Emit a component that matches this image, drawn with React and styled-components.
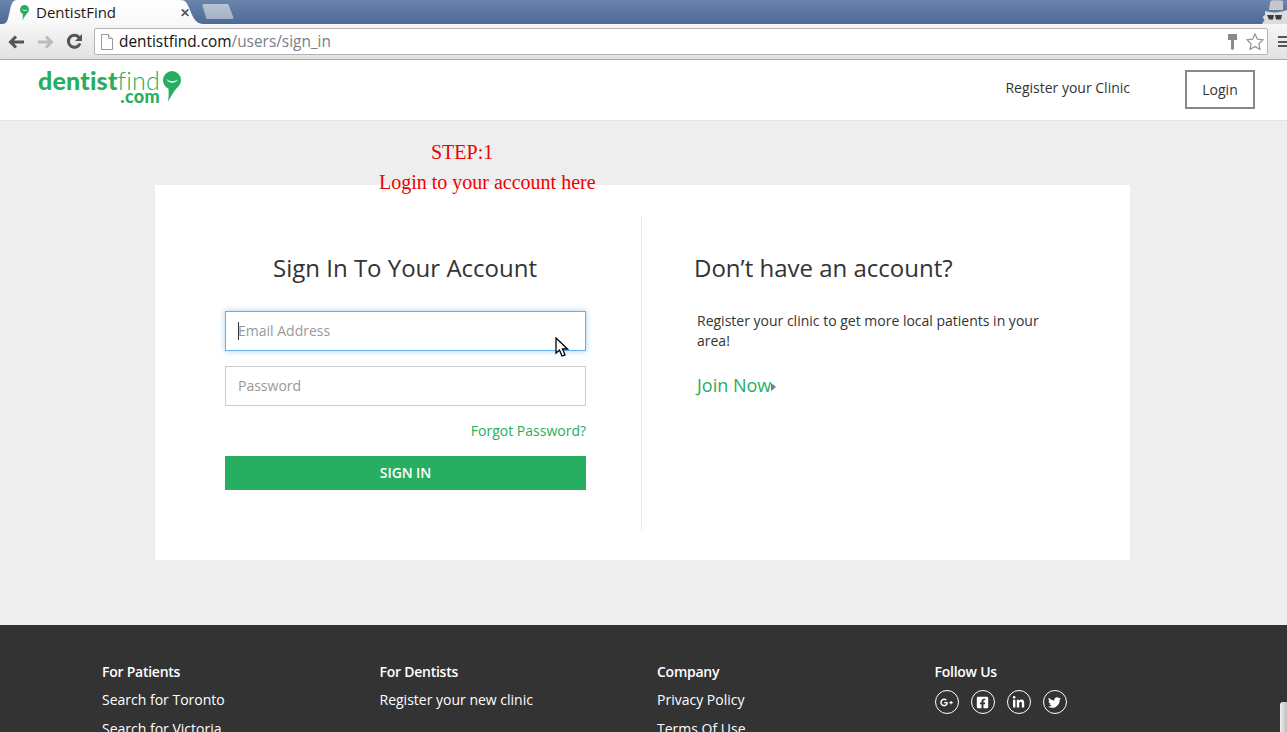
import React from 'react';
import styled, { createGlobalStyle } from 'styled-components';
import { FaGooglePlusG, FaFacebookSquare, FaLinkedinIn, FaTwitter } from 'react-icons/fa';

const GREEN = '#27ae60';

const GlobalStyle = createGlobalStyle`
  html, body {
    margin: 0;
    height: 732px;
    overflow: hidden;
    background: #eeeeee;
    font-family: 'Open Sans', 'Liberation Sans', sans-serif;
  }
  * { box-sizing: border-box; }
`;

const Page = styled.div`
  position: relative;
  display: flex;
  flex-direction: column;
  width: 1287px;
  height: 732px;
  overflow: hidden;
`;

/* browser chrome */
const TabStrip = styled.div`
  position: relative;
  display: flex;
  align-items: flex-end;
  flex: 0 0 24px;
  padding-left: 2px;
  background: linear-gradient(#6a84ab, #4d6a96);
`;

const Tab = styled.div`
  display: flex;
  align-items: center;
  width: 202px;
  height: 24px;
  padding: 0 14px 0 18px;
  background: linear-gradient(#ffffff, #f8f8f8);
  clip-path: path('M0 24 C6 24 6 18 8 10 C10 2 11 0 16 0 L178 0 C184 0 185 3 188 10 C191 18 194 24 202 24 Z');
`;

const TabTitle = styled.span`
  flex: 1;
  margin-left: 7px;
  font-size: 15px;
  color: #1a1a1a;
`;

const TabClose = styled.span`
  font-size: 12px;
  font-weight: 700;
  color: #555;
  margin-top: 1px;
`;

const NewTab = styled.div`
  width: 32px;
  height: 15px;
  margin: 0 0 5px -2px;
  background: linear-gradient(#b8c2d2, #a4b1c6);
  clip-path: polygon(0 0, 82% 0, 100% 100%, 14% 100%);
  border-radius: 2px;
`;

const Spy = styled.svg`
  position: absolute;
  top: 0;
  right: 0;
`;

const Toolbar = styled.div`
  display: flex;
  align-items: center;
  flex: 0 0 36px;
  padding: 0 0 0 8px;
  background: linear-gradient(#f6f6f6, #e2e2e2);
  border-bottom: 1px solid #a9a9a9;
`;

const NavIcons = styled.div`
  display: flex;
  align-items: center;
  gap: 12px;
  width: 86px;
`;

const AddressBar = styled.div`
  display: flex;
  align-items: center;
  width: 1174px;
  height: 27px;
  padding: 0 3px 0 6px;
  background: #fff;
  border: 1px solid #b4b4b4;
  border-radius: 2px;
`;

const Url = styled.span`
  flex: 1;
  margin-left: 6px;
  font-size: 15.4px;
  color: #111;
`;

const UrlPath = styled.span`
  color: #76808c;
`;

const Menu = styled.div`
  width: 9px;
  height: 11px;
  margin-left: 10px;
  border-top: 2px solid #555;
  border-bottom: 2px solid #555;
  position: relative;
  &::after {
    content: '';
    display: block;
    margin-top: 2.5px;
    height: 2px;
    background: #555;
  }
`;

/* site header */
const Header = styled.header`
  display: flex;
  align-items: center;
  flex: 0 0 61px;
  padding: 0 32px 0 38px;
  background: #fff;
  border-bottom: 1px solid #e4e4e4;
`;

const Logo = styled.div`
  display: flex;
  align-items: flex-start;
  flex: 1;
  margin-top: -5px;
`;

const LogoText = styled.div`
  display: flex;
  flex-direction: column;
  align-items: flex-end;
  font-family: 'Lato', sans-serif;
  color: ${GREEN};
  line-height: 1;
`;

const LogoName = styled.div`
  font-size: 25px;
  font-weight: 900;
  letter-spacing: 0.2px;
  height: 22px;
  line-height: 24px;
`;

const LogoFind = styled.span`
  font-weight: 300;
`;

const LogoCom = styled.div`
  font-size: 18px;
  font-weight: 900;
  margin-top: -3px;
  letter-spacing: 0.3px;
`;

const PinSlot = styled.div`
  margin: 3px 0 0 3px;
`;

const HeaderLink = styled.a`
  font-size: 14px;
  color: #333;
  margin: -5px 55px 0 0;
`;

const LoginButton = styled.a`
  display: flex;
  align-items: center;
  justify-content: center;
  width: 70px;
  height: 39px;
  margin-bottom: 1px;
  border: 2px solid #888;
  font-size: 14px;
  color: #333;
`;

/* main area */
const Main = styled.main`
  display: flex;
  justify-content: center;
  flex: 0 0 504px;
  padding: 64px 157px 65px 155px;
  background: #eeeeee;
`;

const Card = styled.section`
  display: grid;
  grid-template-columns: 487px 1fr;
  width: 975px;
  height: 375px;
  padding: 30px 0;
  background: #fff;
`;

const Annotation = styled.div`
  position: absolute;
  top: ${({ $top }) => $top}px;
  left: ${({ $left }) => $left}px;
  font-family: 'Liberation Serif', serif;
  font-size: ${({ $size }) => $size}px;
  color: #f00000;
  white-space: nowrap;
`;

const SignInColumn = styled.div`
  padding: 36px 55px 0 70px;
  border-right: 1px solid #ececec;
`;

const Heading = styled.h2`
  margin: 0;
  padding-right: ${({ $center }) => ($center ? '1px' : '0')};
  font-size: 24px;
  font-weight: 400;
  line-height: 33px;
  color: #333;
  text-align: ${({ $center }) => ($center ? 'center' : 'left')};
`;

const Form = styled.form`
  display: flex;
  flex-direction: column;
  margin-top: 27px;
`;

const FieldWrap = styled.div`
  position: relative;
  margin-bottom: 15px;
`;

const Input = styled.input`
  display: block;
  width: 100%;
  height: 40px;
  padding: 0 12px 2px;
  font-family: inherit;
  font-size: 14px;
  color: #333;
  background: #fff;
  outline: none;
  border: 1px solid ${({ $focused }) => ($focused ? '#66afe9' : '#cccccc')};
  box-shadow: ${({ $focused }) => ($focused ? '0 0 6px rgba(102, 175, 233, 0.6)' : 'none')};
  &::placeholder {
    color: #999;
    opacity: 1;
  }
`;

const Caret = styled.span`
  position: absolute;
  top: 11px;
  left: 13px;
  width: 1px;
  height: 18px;
  background: #333;
`;

const Forgot = styled.a`
  align-self: flex-end;
  margin: 0 0 15px;
  font-size: 14px;
  line-height: 20px;
  color: ${GREEN};
`;

const SignInButton = styled.button`
  height: 34px;
  border: 0;
  padding: 0 0 2px;
  background: ${GREEN};
  color: #fff;
  font-family: inherit;
  font-size: 14px;
  font-weight: 600;
  letter-spacing: -0.1px;
`;

const MouseCursor = styled.svg`
  position: absolute;
  top: 337px;
  left: 555px;
`;

const RegisterColumn = styled.div`
  padding: 36px 60px 0 52px;
`;

const RegisterText = styled.p`
  width: 360px;
  margin: 27px 0 0 3px;
  font-size: 14px;
  line-height: 20px;
  color: #333;
`;

const JoinNow = styled.a`
  display: flex;
  align-items: center;
  margin: 22px 0 0 3px;
  font-size: 18px;
  line-height: 25px;
  color: ${GREEN};
  &::after {
    content: '';
    margin: 2px 0 0 0;
    border-left: 5px solid #6f7f88;
    border-top: 4px solid transparent;
    border-bottom: 4px solid transparent;
  }
`;

/* footer */
const Footer = styled.footer`
  display: grid;
  grid-template-columns: repeat(4, 277.5px);
  flex: 1;
  padding: 37px 0 0 102px;
  background: #333333;
`;

const FooterHeading = styled.div`
  font-size: 14px;
  font-weight: 600;
  letter-spacing: -0.25px;
  line-height: 20px;
  color: #fff;
  margin-bottom: 8px;
`;

const FooterLink = styled.a`
  display: block;
  font-size: 14px;
  line-height: 20px;
  color: #fff;
  margin-bottom: 9px;
  white-space: nowrap;
`;

const SocialRow = styled.div`
  display: flex;
  gap: 12px;
`;

const SocialIcon = styled.a`
  display: flex;
  align-items: center;
  justify-content: center;
  width: 24px;
  height: 24px;
  border: 1px solid #fff;
  border-radius: 50%;
  font-size: 13px;
  color: #fff;
`;

const ScrollThumb = styled.div`
  position: absolute;
  right: 0;
  bottom: 0;
  width: 7px;
  height: 30px;
  border-radius: 3px 0 0 0;
  background: linear-gradient(90deg, #f0f0f0, #bdbdbd);
`;

const FaviconSlot = styled.div`
  display: flex;
  margin-top: 2px;
`;

const footerColumns = [
  { title: 'For Patients', links: ['Search for Toronto', 'Search for Victoria'] },
  { title: 'For Dentists', links: ['Register your new clinic'] },
  { title: 'Company', links: ['Privacy Policy', 'Terms Of Use'] },
];

const Pin = ({ size = 18 }) => (
  <svg width={size} height={size * 1.72} viewBox="0 0 18 31">
    <path d="M9 0a9 9 0 0 1 9 9c0 4-2.500 6.500-4.600 8.500C11 20 7 27 5 31c.6-4 1-9 .4-13.500C2.500 16.500 0 13 0 9a9 9 0 0 1 9-9z" fill={GREEN} />
    <path d="M3 7.500c3 3.500 8 3.500 12 1-2 4-9 5-12-1z" fill="#fff" />
  </svg>
);

const BackIcon = () => (
  <svg width="17" height="16" viewBox="0 0 17 16">
    <path d="M16 8H3M8 2.500 2.500 8 8 13.500" fill="none" stroke="#555" strokeWidth="3" />
  </svg>
);

const ForwardIcon = () => (
  <svg width="17" height="16" viewBox="0 0 17 16">
    <path d="M1 8h13M9 2.500 14.500 8 9 13.500" fill="none" stroke="#bbb" strokeWidth="3" />
  </svg>
);

const ReloadIcon = () => (
  <svg width="17" height="17" viewBox="0 0 17 17">
    <path d="M13.500 5A6 6 0 1 0 14 10.500" fill="none" stroke="#555" strokeWidth="3" />
    <path d="M16 1v7H9z" fill="#555" />
  </svg>
);

const PageIcon = () => (
  <svg width="12" height="16" viewBox="0 0 12 16">
    <path d="M.5.5h7l4 4v11H.500z" fill="#fff" stroke="#999" />
    <path d="M7.500.5v4h4" fill="#eee" stroke="#999" />
  </svg>
);

const KeyIcon = () => (
  <svg width="11" height="16" viewBox="0 0 11 16" style={{ marginRight: 8 }}>
    <path d="M1 0h9v6H7v9l-1.500 1L4 15V6H1z" fill="#8a8a8a" />
  </svg>
);

const StarIcon = () => (
  <svg width="18" height="17" viewBox="0 0 18 17">
    <path d="M9 1l2.400 5.200 5.600.7-4.100 3.900 1.100 5.600L9 13.600l-5 2.800 1.100-5.600L1 6.900l5.600-.7z" fill="#fff" stroke="#999" strokeWidth="1.300" />
  </svg>
);

const SpyIcon = () => (
  <Spy width="26" height="24" viewBox="0 0 26 24">
    <path d="M9 3c1-3 3-3 5-2.500C17 0 20 0 22 1v9H8z" fill="#c4c8ce" />
    <path d="M4 11c6 2 15 2 22-1v14H1l2.500-4L1.500 17 4 15z" fill="#dcdde0" />
    <path d="M6 15h7l-1 4.500H8zM14 15h7l-1 4.500h-5z" fill="#3c3c3c" />
  </Spy>
);

const Arrow = () => (
  <MouseCursor width="14" height="21" viewBox="0 0 14 21">
    <path d="M1 1v15l3.500-3 2.500 6 3-1.200-2.500-5.800H12.500z" fill="#fff" stroke="#000" strokeWidth="1.300" />
  </MouseCursor>
);

export default function App() {
  return (
    <Page>
      <GlobalStyle />

      <TabStrip>
        <Tab>
          <FaviconSlot>
            <Pin size={9} />
          </FaviconSlot>
          <TabTitle>DentistFind</TabTitle>
          <TabClose>✕</TabClose>
        </Tab>
        <NewTab />
        <SpyIcon />
      </TabStrip>

      <Toolbar>
        <NavIcons>
          <BackIcon />
          <ForwardIcon />
          <ReloadIcon />
        </NavIcons>
        <AddressBar>
          <PageIcon />
          <Url>
            dentistfind.com<UrlPath>/users/sign_in</UrlPath>
          </Url>
          <KeyIcon />
          <StarIcon />
        </AddressBar>
        <Menu />
      </Toolbar>

      <Header>
        <Logo>
          <LogoText>
            <LogoName>
              dentist<LogoFind>find</LogoFind>
            </LogoName>
            <LogoCom>.com</LogoCom>
          </LogoText>
          <PinSlot>
            <Pin />
          </PinSlot>
        </Logo>
        <HeaderLink>Register your Clinic</HeaderLink>
        <LoginButton>Login</LoginButton>
      </Header>

      <Main>
        <Card>
          <SignInColumn>
            <Heading $center>Sign In To Your Account</Heading>
            <Form>
              <FieldWrap>
                <Input $focused placeholder="Email Address" />
                <Caret />
              </FieldWrap>
              <FieldWrap>
                <Input placeholder="Password" />
              </FieldWrap>
              <Forgot>Forgot Password?</Forgot>
              <SignInButton type="button">SIGN IN</SignInButton>
            </Form>
          </SignInColumn>
          <RegisterColumn>
            <Heading>Don’t have an account?</Heading>
            <RegisterText>Register your clinic to get more local patients in your area!</RegisterText>
            <JoinNow>Join Now</JoinNow>
          </RegisterColumn>
        </Card>
      </Main>

      <Footer>
        {footerColumns.map((col) => (
          <div key={col.title}>
            <FooterHeading>{col.title}</FooterHeading>
            {col.links.map((link) => (
              <FooterLink key={link}>{link}</FooterLink>
            ))}
          </div>
        ))}
        <div>
          <FooterHeading>Follow Us</FooterHeading>
          <SocialRow>
            <SocialIcon><FaGooglePlusG /></SocialIcon>
            <SocialIcon><FaFacebookSquare /></SocialIcon>
            <SocialIcon><FaLinkedinIn /></SocialIcon>
            <SocialIcon><FaTwitter /></SocialIcon>
          </SocialRow>
        </div>
      </Footer>

      <Annotation $top={141} $left={431} $size={20}>STEP:1</Annotation>
      <Annotation $top={171} $left={379} $size={20}>Login to your account here</Annotation>
      <Arrow />
      <ScrollThumb />
    </Page>
  );
}
